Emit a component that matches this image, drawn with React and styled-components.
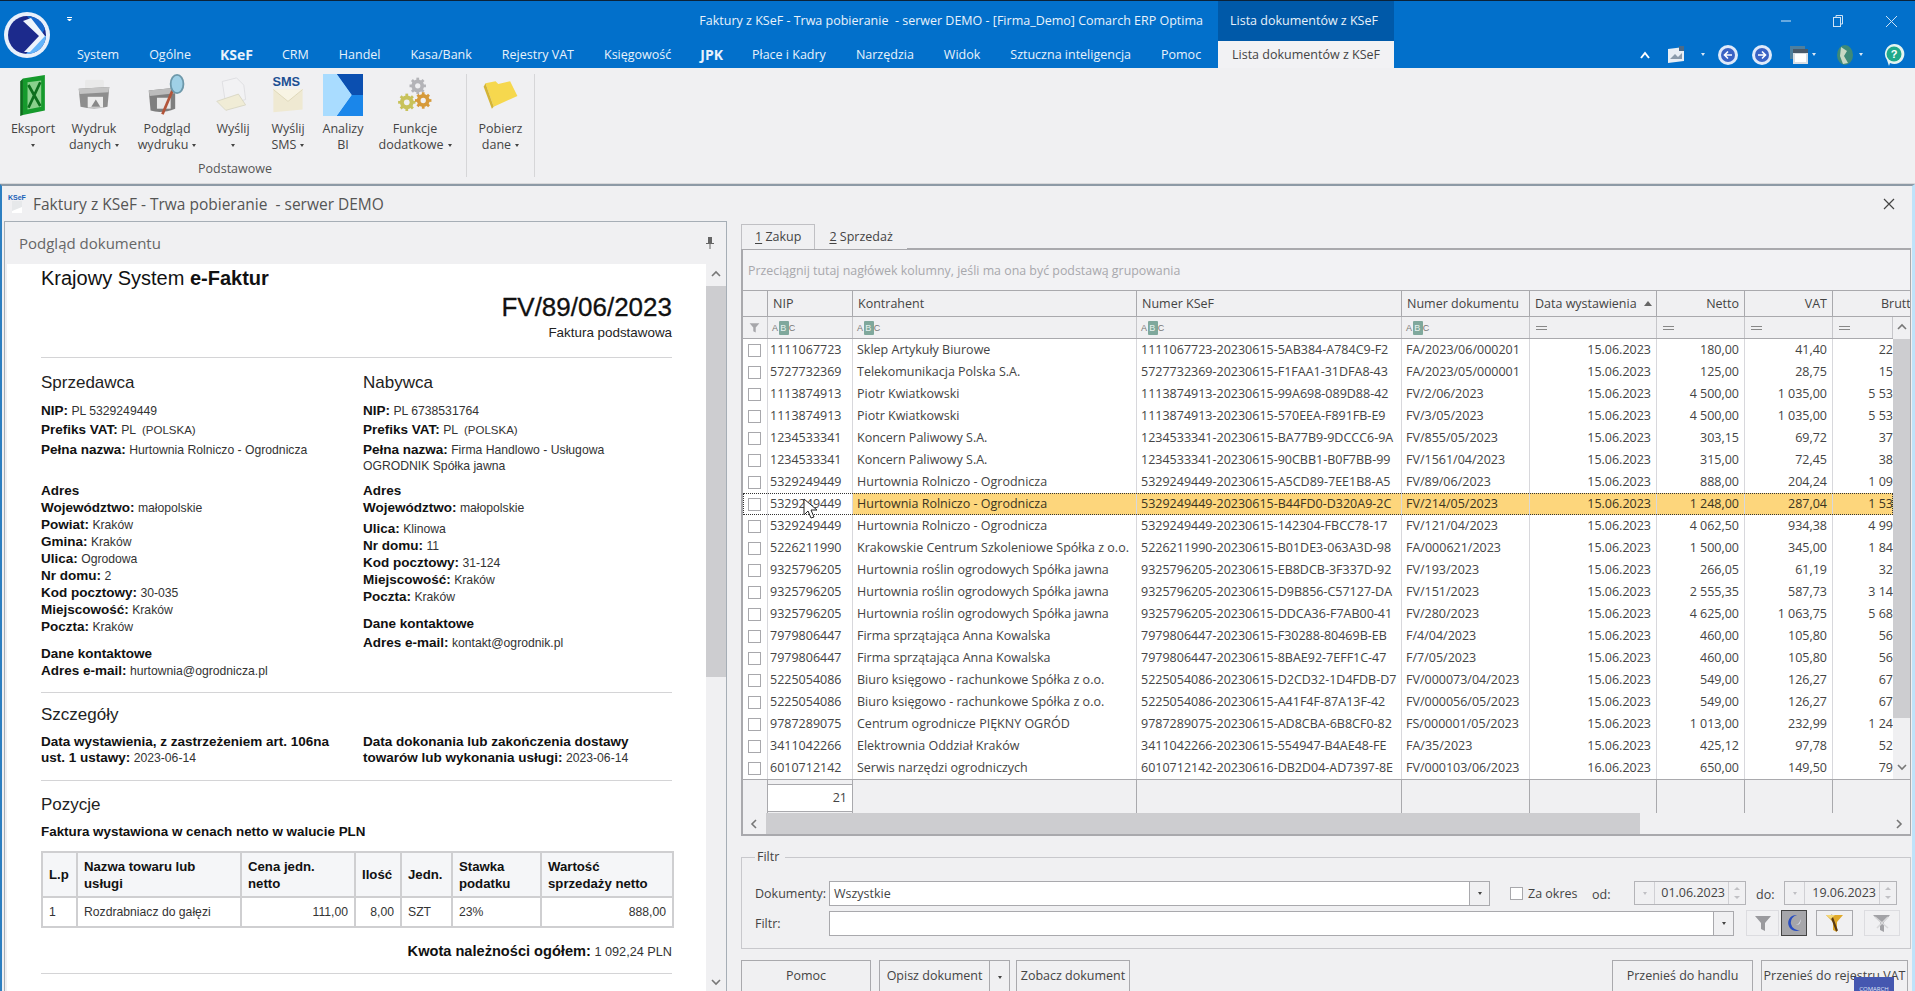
import styled, { createGlobalStyle } from "styled-components";

const UI_FONT = `"Open Sans", "Noto Sans", sans-serif`;
const DOC_FONT = `"Liberation Sans", Arial, sans-serif`;

const COLUMNS = "25px 85px 284px 265px 128px 127px 88px 88px 60px";

const ROWS = [
  ["1111067723", "Sklep Artykuły Biurowe", "1111067723-20230615-5AB384-A784C9-F2", "FA/2023/06/000201", "15.06.2023", "180,00", "41,40", "22"],
  ["5727732369", "Telekomunikacja Polska S.A.", "5727732369-20230615-F1FAA1-31DFA8-43", "FA/2023/05/000001", "15.06.2023", "125,00", "28,75", "15"],
  ["1113874913", "Piotr Kwiatkowski", "1113874913-20230615-99A698-089D88-42", "FV/2/06/2023", "15.06.2023", "4 500,00", "1 035,00", "5 53"],
  ["1113874913", "Piotr Kwiatkowski", "1113874913-20230615-570EEA-F891FB-E9", "FV/3/05/2023", "15.06.2023", "4 500,00", "1 035,00", "5 53"],
  ["1234533341", "Koncern Paliwowy S.A.", "1234533341-20230615-BA77B9-9DCCC6-9A", "FV/855/05/2023", "15.06.2023", "303,15", "69,72", "37"],
  ["1234533341", "Koncern Paliwowy S.A.", "1234533341-20230615-90CBB1-B0F7BB-99", "FV/1561/04/2023", "15.06.2023", "315,00", "72,45", "38"],
  ["5329249449", "Hurtownia Rolniczo - Ogrodnicza", "5329249449-20230615-A5CD89-7EE1B8-A5", "FV/89/06/2023", "15.06.2023", "888,00", "204,24", "1 09"],
  ["5329249449", "Hurtownia Rolniczo - Ogrodnicza", "5329249449-20230615-B44FD0-D320A9-2C", "FV/214/05/2023", "15.06.2023", "1 248,00", "287,04", "1 53"],
  ["5329249449", "Hurtownia Rolniczo - Ogrodnicza", "5329249449-20230615-142304-FBCC78-17", "FV/121/04/2023", "15.06.2023", "4 062,50", "934,38", "4 99"],
  ["5226211990", "Krakowskie Centrum Szkoleniowe Spółka z o.o.", "5226211990-20230615-B01DE3-063A3D-98", "FA/000621/2023", "15.06.2023", "1 500,00", "345,00", "1 84"],
  ["9325796205", "Hurtownia roślin ogrodowych Spółka jawna", "9325796205-20230615-EB8DCB-3F337D-92", "FV/193/2023", "15.06.2023", "266,05", "61,19", "32"],
  ["9325796205", "Hurtownia roślin ogrodowych Spółka jawna", "9325796205-20230615-D9B856-C57127-DA", "FV/151/2023", "15.06.2023", "2 555,35", "587,73", "3 14"],
  ["9325796205", "Hurtownia roślin ogrodowych Spółka jawna", "9325796205-20230615-DDCA36-F7AB00-41", "FV/280/2023", "15.06.2023", "4 625,00", "1 063,75", "5 68"],
  ["7979806447", "Firma sprzątająca Anna Kowalska", "7979806447-20230615-F30288-80469B-EB", "F/4/04/2023", "15.06.2023", "460,00", "105,80", "56"],
  ["7979806447", "Firma sprzątająca Anna Kowalska", "7979806447-20230615-8BAE92-7EFF1C-47", "F/7/05/2023", "15.06.2023", "460,00", "105,80", "56"],
  ["5225054086", "Biuro księgowo - rachunkowe Spółka z o.o.", "5225054086-20230615-D2CD32-1D4FDB-D7", "FV/000073/04/2023", "15.06.2023", "549,00", "126,27", "67"],
  ["5225054086", "Biuro księgowo - rachunkowe Spółka z o.o.", "5225054086-20230615-A41F4F-87A13F-42", "FV/000056/05/2023", "15.06.2023", "549,00", "126,27", "67"],
  ["9787289075", "Centrum ogrodnicze PIĘKNY OGRÓD", "9787289075-20230615-AD8CBA-6B8CF0-82", "FS/000001/05/2023", "15.06.2023", "1 013,00", "232,99", "1 24"],
  ["3411042266", "Elektrownia Oddział Kraków", "3411042266-20230615-554947-B4AE48-FE", "FA/35/2023", "15.06.2023", "425,12", "97,78", "52"],
  ["6010712142", "Serwis narzędzi ogrodniczych", "6010712142-20230616-DB2D04-AD7397-8E", "FV/000103/06/2023", "16.06.2023", "650,00", "149,50", "79"],
];

const MENU = [
  ["System"], ["Ogólne"], ["KSeF", true], ["CRM"], ["Handel"], ["Kasa/Bank"], ["Rejestry VAT"],
  ["Księgowość"], ["JPK", true], ["Płace i Kadry"], ["Narzędzia"], ["Widok"], ["Sztuczna inteligencja"], ["Pomoc"],
];

const GlobalStyle = createGlobalStyle`
  html, body { margin: 0; padding: 0; background: #f0f0f2; overflow: hidden; }
  * { box-sizing: border-box; }
`;

const Page = styled.div`
  width: 1915px;
  height: 991px;
  overflow: hidden;
  font-family: ${UI_FONT};
  font-size: 12.5px;
  color: #444;
  background: #f0f0f2;
`;

const TitleBar = styled.header`
  height: 68px;
  display: flex;
  background: #0270cb;
  border-top: 1px solid #0b2238;
  color: #fff;
`;

const LogoSlot = styled.div`
  width: 62px;
  flex-shrink: 0;
  padding: 11px 0 0 4px;
`;

const TitleColumn = styled.div`
  flex: 1;
  min-width: 0;
  display: flex;
  flex-direction: column;
`;

const TopRow = styled.div`
  height: 40px;
  display: flex;
  align-items: stretch;
`;

const QuickAccess = styled.span`
  margin: 16px 0 0 5px;
  width: 5px;
  height: 5px;
  border-top: 1px solid #fff;
  &::after {
    content: "";
    display: block;
    margin-top: 1px;
    border: 2.5px solid transparent;
    border-top-color: #fff;
    border-bottom: 0;
  }
`;

const WindowTitle = styled.div`
  margin-left: auto;
  padding-right: 15px;
  line-height: 40px;
  white-space: pre;
  color: #e8f2fb;
`;

const ContextTab = styled.div`
  width: 176px;
  background: #0059a8;
  line-height: 40px;
  padding-left: 12px;
  color: #e8f2fb;
`;

const WindowControls = styled.div`
  width: 521px;
  display: flex;
  justify-content: flex-end;
  align-items: center;
  gap: 42px;
  padding: 0 17px 0 0;
  color: #cfe3f5;
`;

const MenuRow = styled.nav`
  height: 27px;
  display: flex;
  align-items: center;
`;

const MenuTab = styled.div`
  padding: 0 ${(p) => (p.$bold ? 14 : 15)}px;
  line-height: 27px;
  white-space: nowrap;
  font-weight: ${(p) => (p.$bold ? 700 : 400)};
  font-size: ${(p) => (p.$bold ? "14px" : "12.5px")};
  color: #e8f2fb;
`;

const ActiveTab = styled.div`
  margin-left: auto;
  width: 176px;
  flex-shrink: 0;
  height: 27px;
  line-height: 27px;
  text-align: center;
  background: #f2f2f4;
  color: #444;
`;

const HeadTools = styled.div`
  width: 521px;
  flex-shrink: 0;
  display: flex;
  align-items: center;
  padding-left: 246px;
`;

const HeadTool = styled.span`
  display: flex;
  margin-left: ${(p) => p.$left}px;
`;

const TinyCaret = styled.span`
  display: inline-block;
  width: 0;
  height: 0;
  border: 2.5px solid transparent;
  border-top: 3px solid ${(p) => p.$color || "#444"};
  border-bottom: 0;
  vertical-align: middle;
  margin-left: ${(p) => (p.$left === undefined ? 4 : p.$left)}px;
`;

const Ribbon = styled.section`
  height: 116px;
  display: flex;
  background: #f0f0f2;
  padding-top: 6px;
  border-bottom: 1px solid #d8d8da;
`;

const RibbonGroup = styled.div`
  width: ${(p) => p.$w}px;
  height: 103px;
  padding-left: ${(p) => p.$pad || 0}px;
  border-right: 1px solid #d6d6d8;
  display: flex;
  flex-direction: column;
`;

const RibbonButtons = styled.div`
  display: flex;
  height: 90px;
`;

const RibbonButton = styled.div`
  width: ${(p) => p.$w}px;
  display: flex;
  flex-direction: column;
  align-items: center;
  text-align: center;
  line-height: 16px;
  color: #444;
  svg {
    height: 42px;
    margin-bottom: 5px;
  }
`;

const RibbonCaption = styled.div`
  text-align: center;
  line-height: 16px;
  color: #555;
`;

const WindowFrame = styled.main`
  height: 807px;
  border-top: 2px solid #8d9aa6;
  border-left: 2px solid #2d7fc1;
  border-right: 3px solid #bfe3fa;
  background: #f0f0f2;
`;

const WindowHead = styled.div`
  height: 35px;
  display: flex;
  align-items: center;
  justify-content: space-between;
  padding: 0 17px 0 6px;
  font-size: 15.5px;
  color: #555;
`;

const WindowName = styled.div`
  display: flex;
  align-items: flex-start;
  gap: 5px;
  white-space: pre;
`;

const Workspace = styled.div`
  display: flex;
  padding-left: 2px;
  height: 770px;
`;

const PreviewPanel = styled.aside`
  width: 723px;
  height: 770px;
  overflow: hidden;
  border: 1px solid #a6aeb6;
  border-bottom: 0;
`;

const PanelHead = styled.div`
  height: 42px;
  display: flex;
  align-items: center;
  justify-content: space-between;
  padding: 0 12px 0 14px;
  font-size: 15px;
  color: #666;
`;

const PanelBody = styled.div`
  display: flex;
  height: 730px;
  margin-left: 2px;
`;

const DocSheet = styled.article`
  width: 701px;
  background: #fff;
  padding: 2px 34px 0 34px;
  font-family: ${DOC_FONT};
  font-size: 12.2px;
  color: #333;
  overflow: hidden;
  b { font-size: 13.5px; color: #111; }
`;

const DocSystem = styled.h1`
  margin: 0;
  font-size: 20px;
  line-height: 24px;
  font-weight: 400;
  color: #111;
  b { font-weight: 700; font-size: 20px; }
`;

const DocNumber = styled.div`
  margin-top: 2px;
  text-align: right;
  font-size: 26px;
  line-height: 30px;
  color: #111;
  -webkit-text-stroke: 0.3px #111;
`;

const DocType = styled.div`
  margin-top: 2px;
  text-align: right;
  font-size: 13.4px;
  line-height: 18px;
  color: #222;
`;

const Rule = styled.hr`
  margin: ${(p) => p.$top}px 0 0;
  border: 0;
  border-top: 1px solid #d4d4d6;
`;

const SectionTitle = styled.h2`
  margin: ${(p) => p.$top}px 0 0;
  font-size: 17px;
  line-height: 20px;
  font-weight: 400;
  color: #222;
`;

const Parties = styled.div`
  display: grid;
  grid-template-columns: 322px 1fr;
`;

const Field = styled.div`
  margin-top: ${(p) => p.$top || 0}px;
  line-height: 16px;
  height: ${(p) => (p.$tall ? "auto" : "17px")};
  white-space: nowrap;
`;

const Small = styled.span`
  font-size: 11.5px;
  margin-left: 3px;
`;

const NameBlock = styled.div`
  height: 58px;
`;

const DetailRow = styled.div`
  display: grid;
  grid-template-columns: 322px 1fr;
  margin-top: 9px;
  line-height: 16px;
`;

const PositionsNote = styled.div`
  margin-top: 9px;
  line-height: 16px;
  font-weight: 700;
  font-size: 13.4px;
  color: #111;
`;

const ItemsTable = styled.table`
  width: 631px;
  margin-top: 11px;
  border-collapse: collapse;
  table-layout: fixed;
  th, td {
    border: 2px solid #cfcfd1;
    padding: 0 6px;
    line-height: 17px;
    text-align: left;
  }
  th {
    height: 45px;
    font-size: 13.2px;
    background: #f5f6f8;
    color: #111;
    white-space: nowrap;
  }
  td { height: 30px; }
`;

const NumCell = styled.td`
  && { text-align: right; }
`;

const TotalLine = styled.div`
  margin-top: 14px;
  text-align: right;
  font-size: 12.7px;
  line-height: 18px;
  b { font-size: 14.6px; }
`;

const VScroll = styled.div`
  width: ${(p) => p.$w}px;
  display: flex;
  flex-direction: column;
  align-items: center;
  background: #f0f0f2;
  flex-shrink: 0;
`;

const ScrollArrow = styled.div`
  height: ${(p) => p.$h}px;
  width: 100%;
  display: flex;
  align-items: center;
  justify-content: center;
  color: #777;
`;

const VThumb = styled.div`
  width: 100%;
  height: ${(p) => p.$h}px;
  background: #cdcdd0;
`;

const VTrack = styled.div`
  flex: 1;
`;

const ListPanel = styled.section`
  width: 1170px;
  margin-left: 14px;
`;

const TabStrip = styled.div`
  margin-top: 3px;
  height: 24px;
  display: flex;
`;

const ListTab = styled.div`
  height: 25px;
  padding: 0 13px;
  line-height: 23px;
  background: #f0f0f2;
  border: ${(p) => (p.$active ? "1px solid #c0c0c4" : "1px solid transparent")};
  border-bottom: 0;
  position: relative;
  u { text-underline-offset: 2px; }
`;

const GridBox = styled.div`
  height: 588px;
  border: 2px solid #a9a9ad;
  border-right-width: 1px;
  display: flex;
  flex-direction: column;
  overflow: hidden;
`;

const GroupHint = styled.div`
  height: 40px;
  line-height: 42px;
  padding-left: 5px;
  color: #a8a8ac;
  font-size: 12.4px;
  background: #f2f2f4;
`;

const HeaderRow = styled.div`
  display: grid;
  grid-template-columns: ${COLUMNS} 1fr;
  height: 27px;
  border-top: 1px solid #a9a9ad;
  border-bottom: 1px solid #a9a9ad;
`;

const HeaderCell = styled.div`
  display: flex;
  align-items: center;
  justify-content: ${(p) => (p.$right ? "flex-end" : "flex-start")};
  padding: 0 5px;
  border-right: 1px solid #a9a9ad;
  white-space: nowrap;
  overflow: hidden;
  gap: 7px;
`;

const LastHeaderCell = styled(HeaderCell)`
  grid-column: span 2;
  border-right: 0;
  padding: 0 0 0 48px;
`;

const SortMark = styled.span`
  width: 0;
  height: 0;
  border: 4px solid transparent;
  border-bottom: 5px solid #666;
  border-top: 0;
`;

const GridMiddle = styled.div`
  flex: 1;
  display: flex;
  min-height: 0;
`;

const GridData = styled.div`
  width: 1150px;
  display: flex;
  flex-direction: column;
`;

const FilterRow = styled.div`
  display: grid;
  grid-template-columns: ${COLUMNS};
  height: 22px;
  border-bottom: 1px solid #a9a9ad;
`;

const FilterCell = styled.div`
  display: flex;
  align-items: center;
  padding-left: ${(p) => p.$pad ?? 4}px;
  border-right: 1px solid #c6c6ca;
`;

const AbcMark = styled.span`
  font-size: 9px;
  letter-spacing: 0.8px;
  color: #777;
  font-family: ${DOC_FONT};
  b {
    display: inline-block;
    padding: 2px 1.5px;
    font-weight: 400;
    background: #7fa89c;
    color: #e8f2ee;
    border-radius: 1px;
  }
`;

const EqualsMark = styled.span`
  width: 11px;
  height: 4px;
  margin-left: 2px;
  border-top: 1px solid #888;
  border-bottom: 1px solid #888;
`;

const DataRow = styled.div`
  display: grid;
  grid-template-columns: ${COLUMNS};
  height: 22px;
  background: #fff;
  ${(p) => p.$selected && "outline: 1px dotted #333; outline-offset: -1px;"}
`;

const DataCell = styled.div`
  line-height: 22px;
  padding: 0 ${(p) => (p.$clip ? 0 : 5)}px 0 ${(p) => (p.$first ? 2 : 4)}px;
  text-align: ${(p) => (p.$right ? "right" : "left")};
  border-right: ${(p) => (p.$clip ? "0" : "1px solid #d8d8dc")};
  white-space: nowrap;
  overflow: hidden;
  background: ${(p) => (p.$selected ? "#fdd67c" : "transparent")};
  color: ${(p) => (p.$selected ? "#3a3320" : "#444")};
`;

const CheckCell = styled.div`
  display: flex;
  align-items: center;
  justify-content: center;
  padding-right: 1px;
  border-right: 1px solid #d8d8dc;
`;

const CheckBox = styled.span`
  display: block;
  width: 13px;
  height: 13px;
  background: #fff;
  border: 1px solid #a8a8ac;
`;

const SummaryRow = styled.div`
  display: grid;
  grid-template-columns: ${COLUMNS} 1fr;
  height: 34px;
  border-top: 1px solid #a9a9ad;
`;

const SummaryCell = styled.div`
  border-right: ${(p) => (p.$last ? "0" : "1px solid #a9a9ad")};
`;

const SummaryBox = styled.div`
  height: 28px;
  margin: 4px -1px 0 -1px;
  background: #fff;
  border: 1px solid #a9a9ad;
  text-align: right;
  line-height: 26px;
  padding-right: 5px;
`;

const HScroll = styled.div`
  height: 21px;
  display: flex;
  align-items: stretch;
`;

const HArrow = styled.div`
  width: ${(p) => p.$w}px;
  display: flex;
  align-items: center;
  justify-content: center;
  color: #777;
`;

const HThumb = styled.div`
  width: 874px;
  background: #cdcdd0;
`;

const HTrack = styled.div`
  flex: 1;
`;

const FilterGroup = styled.fieldset`
  margin: 13px 0 0;
  height: 100px;
  padding: 15px 6px 0 13px;
  border: 1px solid #c8c8cc;
  min-width: 0;
`;

const FilterLegend = styled.legend`
  margin-left: 0;
  padding: 0 6px 0 2px;
  line-height: 16px;
  height: 16px;
`;

const FilterLine = styled.div`
  display: flex;
  align-items: center;
  height: 26px;
  margin-bottom: 4px;
`;

const FilterLabel = styled.label`
  width: 74px;
  flex-shrink: 0;
`;

const ComboBox = styled.div`
  width: ${(p) => p.$w}px;
  height: 25px;
  display: flex;
  background: #fff;
  border: 1px solid #a9a9ad;
`;

const ComboText = styled.div`
  flex: 1;
  line-height: 23px;
  padding-left: 4px;
`;

const ComboButton = styled.div`
  width: 20px;
  background: #f0f0f2;
  border-left: 1px solid #a9a9ad;
  display: flex;
  align-items: center;
  justify-content: center;
`;

const PeriodCheck = styled.label`
  display: flex;
  align-items: center;
  gap: 5px;
  margin-left: 20px;
  width: 82px;
`;

const DateLabel = styled.span`
  width: ${(p) => p.$w}px;
  padding: 2px 0 0 ${(p) => p.$pad || 0}px;
`;

const DateBox = styled.div`
  width: ${(p) => p.$w}px;
  height: 24px;
  display: flex;
  border: 1px solid #b4b4b8;
  background: #f0f0f2;
`;

const DateDrop = styled.div`
  width: 20px;
  border-right: 1px solid #d0d0d4;
  display: flex;
  align-items: center;
  justify-content: center;
`;

const DateText = styled.div`
  flex: 1;
  text-align: right;
  line-height: 22px;
  padding-right: 3px;
`;

const DateSpin = styled.div`
  width: 17px;
  border-left: 1px solid #d0d0d4;
  display: flex;
  flex-direction: column;
  align-items: center;
  justify-content: space-evenly;
`;

const SpinUp = styled.span`
  width: 0;
  height: 0;
  border: 3px solid transparent;
  border-bottom: 3px solid #c0c0c4;
  border-top: 0;
`;

const SpinDown = styled(SpinUp)`
  border-bottom: 0;
  border-top: 3px solid #c0c0c4;
`;

const ToolButton = styled.div`
  width: ${(p) => p.$w}px;
  height: 26px;
  margin-left: ${(p) => p.$left}px;
  display: flex;
  align-items: center;
  justify-content: center;
  border: 1px solid ${(p) => (p.$active ? "#444" : p.$strong ? "#a9a9ad" : "#dcdce0")};
  background: ${(p) => (p.$active ? "#a6a6aa" : "#f0f0f2")};
`;

const ActionBar = styled.div`
  margin-top: 11px;
  height: 36px;
  display: flex;
  position: relative;
  padding-right: 3px;
`;

const ActionButton = styled.div`
  width: ${(p) => p.$w}px;
  margin-left: ${(p) => p.$left || 0}px;
  height: 34px;
  line-height: 30px;
  text-align: center;
  white-space: nowrap;
  background: #f0f0f2;
  border: 1px solid #a9a9ad;
`;

const SplitButton = styled(ActionButton)`
  display: flex;
`;

const SplitMain = styled.div`
  flex: 1;
`;

const SplitDrop = styled.div`
  width: 20px;
  border-left: 1px solid #a9a9ad;
  display: flex;
  align-items: center;
  justify-content: center;
`;

const ActionGap = styled.div`
  flex: 1;
`;

const VendorBadge = styled.div`
  position: absolute;
  right: 17px;
  top: 17px;
  width: 40px;
  height: 16px;
  background: #4557b0;
  color: #dfe4f7;
  font-size: 6px;
  line-height: 24px;
  text-align: center;
`;

const MouseCursor = styled.svg`
  position: absolute;
  left: 803px;
  top: 498px;
`;

function Chevron({ up, down, left, right }) {
  const d = up ? "M1 6 L5 2 L9 6" : down ? "M1 2 L5 6 L9 2" : left ? "M6 1 L2 5 L6 9" : right ? "M2 1 L6 5 L2 9" : "";
  return (
    <svg width="10" height="10" viewBox="0 0 10 10" fill="none" stroke="#777" strokeWidth="1.6">
      <path d={d} />
    </svg>
  );
}

function Logo() {
  return (
    <svg width="46" height="46" viewBox="0 0 46 46">
      <circle cx="23" cy="23" r="23" fill="#e8f0fb" />
      <circle cx="23" cy="23" r="19" fill="#1c2a8c" />
      <path d="M23 4 A19 19 0 0 1 41 17 L37 23 L23 4Z" fill="#1668cc" />
      <path d="M37 24 L42 24 A19 19 0 0 1 22 42 L37 24Z" fill="#63b4fa" />
      <path d="M19 9 L35 24 L20 40 L26 40 L41 24 L27 6Z" fill="#eef4fc" />
    </svg>
  );
}

function KsefIcon() {
  return (
    <svg width="20" height="22" viewBox="0 0 20 22">
      <rect x="4" y="8" width="10" height="12" fill="#e6e8ea" />
      <path d="M4 18 L14 14 L14 20 L4 20Z" fill="#fff" />
      <text x="0" y="7" fontSize="7" fontWeight="700" fill="#1a62b8" fontFamily="Liberation Sans, sans-serif">KSeF</text>
    </svg>
  );
}

function ExcelIcon() {
  return (
    <svg viewBox="0 0 30 46" width="30">
      <path d="M4 5 L28 1 L28 40 L4 45Z" fill="#169a2c" />
      <path d="M9 9 L24 7 L24 36 L9 39Z" fill="#8ad08c" />
      <path d="M10 12 L23 35 M23 9 L10 37" stroke="#0d6f1d" strokeWidth="3" />
      <path d="M4 5 L1 8 L1 46 L4 45Z" fill="#0c6d1c" />
    </svg>
  );
}

function PrinterIcon() {
  return (
    <svg viewBox="0 0 40 46" width="36">
      <rect x="10" y="6" width="21" height="14" rx="2" fill="#e9e9e9" />
      <path d="M3 16 L37 14 L35 36 Q20 40 5 36Z" fill="#8e8e8e" />
      <path d="M3 16 L37 14 L36 20 L4 22Z" fill="#c4c4c4" />
      <rect x="13" y="25" width="17" height="12" fill="#ececec" />
      <path d="M17 36 L22 28 L27 36Z" fill="#888" />
    </svg>
  );
}

function PreviewIcon() {
  return (
    <svg viewBox="0 0 42 46" width="40">
      <path d="M1 18 L30 15 L30 38 Q15 44 3 40Z" fill="#7f7f7f" />
      <path d="M1 18 L30 15 L30 21 L2 24Z" fill="#bcbcbc" />
      <rect x="10" y="26" width="15" height="12" fill="#e8e8e8" />
      <path d="M16 44 L27 18" stroke="#b3553a" strokeWidth="3" />
      <ellipse cx="32" cy="11" rx="7" ry="10" fill="#9fd0e6" stroke="#6d98aa" strokeWidth="2" />
    </svg>
  );
}

function SendIcon() {
  return (
    <svg viewBox="0 0 40 46" width="36">
      <path d="M8 8 L24 4 L32 12 L34 28 L12 34Z" fill="#f2f2f4" stroke="#dcdce0" />
      <path d="M2 30 L26 22 L34 34 L12 40Z" fill="#f0ecd6" stroke="#d8d6c4" />
    </svg>
  );
}

function SmsIcon() {
  return (
    <svg viewBox="0 0 36 46" width="34">
      <text x="1" y="13" fontSize="14" fontWeight="700" fill="#1c4f92" fontFamily="Liberation Sans, sans-serif">SMS</text>
      <path d="M2 17 L34 17 L34 39 L2 42Z" fill="#efe9d2" />
      <path d="M2 17 L18 30 L34 17" fill="#f8f4e4" stroke="#ddd6b8" />
    </svg>
  );
}

function BiIcon() {
  return (
    <svg viewBox="0 0 40 46" width="40" preserveAspectRatio="none">
      <rect width="40" height="46" rx="2" fill="#0f6fd8" />
      <path d="M0 0 H14 L29 23 L14 46 H0Z" fill="#a9dcff" />
      <path d="M14 0 H40 V23 H29Z" fill="#0b4fb0" />
      <path d="M29 23 H40 V46 H14Z" fill="#1a86ea" />
    </svg>
  );
}

function Gear({ x, y, r, color }) {
  const teeth = [0, 45, 90, 135].map((a) => (
    <rect key={a} x={x - 1.5} y={y - r - 2} width="3" height={2 * r + 4} fill={color} transform={`rotate(${a} ${x} ${y})`} />
  ));
  return (
    <g>
      {teeth}
      <circle cx={x} cy={y} r={r} fill={color} />
      <circle cx={x} cy={y} r={r / 2.4} fill="#f0f0f2" />
    </g>
  );
}

function GearsIcon() {
  return (
    <svg viewBox="0 0 40 46" width="38">
      <Gear x={23} y={13} r={7} color="#b4b4b8" />
      <Gear x={11} y={31} r={7.5} color="#c8c25a" />
      <Gear x={29} y={29} r={7} color="#d69a3a" />
    </svg>
  );
}

function FolderIcon() {
  return (
    <svg viewBox="0 0 40 46" width="38">
      <path d="M3 10 L14 8 L17 11 L30 8 L38 24 L12 36 Z" fill="#f6d84e" />
      <path d="M3 10 L12 36 L10 38 L1 14Z" fill="#d4b436" />
    </svg>
  );
}

function PictureTool() {
  return (
    <svg width="20" height="20" viewBox="0 0 20 20">
      <path d="M2 4 L18 2 L18 16 L2 18Z" fill="#e8eef4" />
      <path d="M4 14 L9 9 L12 12 L16 8 L16 14Z" fill="#8a9aaa" />
      <rect x="13" y="1" width="5" height="5" fill="#4a6a88" />
    </svg>
  );
}

function NavTool({ back }) {
  return (
    <svg width="22" height="22" viewBox="0 0 22 22">
      <circle cx="11" cy="11" r="10" fill="#dfeafa" />
      <circle cx="11" cy="11" r="7" fill="#3a62c4" />
      <path d={back ? "M15 11 H8 M11 7.5 L7.5 11 L11 14.5" : "M7 11 H14 M11 7.5 L14.5 11 L11 14.5"} stroke="#fff" strokeWidth="1.6" fill="none" />
    </svg>
  );
}

function WindowsTool() {
  return (
    <svg width="20" height="20" viewBox="0 0 20 20">
      <rect x="1" y="1" width="15" height="13" fill="#4d7f9f" />
      <rect x="4" y="4" width="15" height="15" fill="#d8dee4" />
      <rect x="4" y="4" width="15" height="4" fill="#4a5a6a" />
      <rect x="6" y="9" width="11" height="8" fill="#fff" />
    </svg>
  );
}

function GlobeTool() {
  return (
    <svg width="20" height="22" viewBox="0 0 20 22">
      <ellipse cx="10" cy="11" rx="8" ry="10" fill="#3e8a78" />
      <path d="M6 3 L12 7 L9 12 L13 19 L8 20 L5 12Z" fill="#c8d8c4" />
    </svg>
  );
}

function HelpTool() {
  return (
    <svg width="22" height="24" viewBox="0 0 22 24">
      <path d="M11 1 A10 10 0 1 1 7 20 L6 23 L4 17 A10 10 0 0 1 11 1Z" fill="#e4f4f0" />
      <circle cx="11" cy="11" r="7.5" fill="#1fa98a" />
      <text x="11" y="15" fontSize="11" fontWeight="700" fill="#fff" textAnchor="middle" fontFamily="Liberation Sans, sans-serif">?</text>
    </svg>
  );
}

function PinIcon() {
  return (
    <svg width="8" height="12" viewBox="0 0 8 12">
      <path d="M2 0 H6 V6 H8 V7 H4.5 V12 H3.5 V7 H0 V6 H2Z" fill="#666" />
    </svg>
  );
}

function FunnelIcon({ color = "#9a9a9e", size = 18 }) {
  return (
    <svg width={size} height={size} viewBox="0 0 18 18">
      <path d="M1 2 H17 L11 9 V17 L7 15 V9Z" fill={color} />
    </svg>
  );
}

function MoonIcon() {
  return (
    <svg width="16" height="18" viewBox="0 0 16 18">
      <path d="M11 1 A8 8 0 1 0 14 16 A7 7 0 0 1 11 1Z" fill="#2a4ec0" />
      <path d="M14 5 A4 4 0 0 1 10 11 A5 5 0 0 0 14 5Z" fill="#e8ecf8" />
    </svg>
  );
}

function FunnelEditIcon() {
  return (
    <svg width="20" height="20" viewBox="0 0 20 20">
      <path d="M1 2 H18 L12 9 V19 L8 17 V9Z" fill="#e0a92a" />
      <path d="M6 2 L12 18" stroke="#5a3a14" strokeWidth="2.2" />
      <path d="M1 2 H10 L6 6Z" fill="#f4d878" />
    </svg>
  );
}

function FunnelClearIcon() {
  return (
    <svg width="20" height="20" viewBox="0 0 20 20">
      <path d="M1 2 H18 L12 9 V19 L8 17 V9Z" fill="#a2a2a6" />
      <path d="M3 4 L16 15 M16 4 L5 15" stroke="#d8d8da" strokeWidth="1.6" />
    </svg>
  );
}

function AbcFilter() {
  return (
    <AbcMark>
      A<b>B</b>C
    </AbcMark>
  );
}

function RibbonItem({ w, icon, lines, caret }) {
  return (
    <RibbonButton $w={w}>
      {icon}
      <div>{lines[0]}</div>
      <div>
        {lines[1]}
        {caret && <TinyCaret $left={lines[1] ? 4 : 0} />}
      </div>
    </RibbonButton>
  );
}

function Party({ name, nip, fullName, address, mail }) {
  const buyer = name === "Nabywca";
  return (
    <div>
      <SectionTitle $top={15}>{name}</SectionTitle>
      <NameBlock>
        <Field $top={10}><b>NIP:</b> PL {nip}</Field>
        <Field $top={2}><b>Prefiks VAT:</b> PL <Small>(POLSKA)</Small></Field>
        <Field $top={3} $tall><b>Pełna nazwa:</b> {fullName}</Field>
      </NameBlock>
      <Field $top={22}><b>Adres</b></Field>
      {address.map(([label, value]) => (
        <Field key={label} $top={label === "Ulica" && buyer ? 4 : 0}>
          <b>{label}:</b> {value}
        </Field>
      ))}
      <Field $top={10}><b>Dane kontaktowe</b></Field>
      <Field $top={buyer ? 2 : 0}><b>Adres e-mail:</b> {mail}</Field>
    </div>
  );
}

function DocumentPreview() {
  return (
    <DocSheet>
      <DocSystem>Krajowy System <b>e-Faktur</b></DocSystem>
      <DocNumber>FV/89/06/2023</DocNumber>
      <DocType>Faktura podstawowa</DocType>
      <Rule $top={15} />
      <Parties>
        <Party
          name="Sprzedawca"
          nip="5329249449"
          fullName="Hurtownia Rolniczo - Ogrodnicza"
          mail="hurtownia@ogrodnicza.pl"
          address={[
            ["Województwo", "małopolskie"],
            ["Powiat", "Kraków"],
            ["Gmina", "Kraków"],
            ["Ulica", "Ogrodowa"],
            ["Nr domu", "2"],
            ["Kod pocztowy", "30-035"],
            ["Miejscowość", "Kraków"],
            ["Poczta", "Kraków"],
          ]}
        />
        <Party
          name="Nabywca"
          nip="6738531764"
          fullName={<>Firma Handlowo - Usługowa<br />OGRODNIK Spółka jawna</>}
          mail="kontakt@ogrodnik.pl"
          address={[
            ["Województwo", "małopolskie"],
            ["Ulica", "Klinowa"],
            ["Nr domu", "11"],
            ["Kod pocztowy", "31-124"],
            ["Miejscowość", "Kraków"],
            ["Poczta", "Kraków"],
          ]}
        />
      </Parties>
      <Rule $top={12} />
      <SectionTitle $top={12}>Szczegóły</SectionTitle>
      <DetailRow>
        <div><b>Data wystawienia, z zastrzeżeniem art. 106na<br />ust. 1 ustawy:</b> 2023-06-14</div>
        <div><b>Data dokonania lub zakończenia dostawy<br />towarów lub wykonania usługi:</b> 2023-06-14</div>
      </DetailRow>
      <Rule $top={14} />
      <SectionTitle $top={14}>Pozycje</SectionTitle>
      <PositionsNote>Faktura wystawiona w cenach netto w walucie PLN</PositionsNote>
      <ItemsTable>
        <colgroup>
          <col width="35" />
          <col width="164" />
          <col width="114" />
          <col width="46" />
          <col width="51" />
          <col width="89" />
          <col width="132" />
        </colgroup>
        <thead>
          <tr>
            <th>L.p</th>
            <th>Nazwa towaru lub<br />usługi</th>
            <th>Cena jedn.<br />netto</th>
            <th>Ilość</th>
            <th>Jedn.</th>
            <th>Stawka<br />podatku</th>
            <th>Wartość<br />sprzedaży netto</th>
          </tr>
        </thead>
        <tbody>
          <tr>
            <td>1</td>
            <td>Rozdrabniacz do gałęzi</td>
            <NumCell>111,00</NumCell>
            <NumCell>8,00</NumCell>
            <td>SZT</td>
            <td>23%</td>
            <NumCell>888,00</NumCell>
          </tr>
        </tbody>
      </ItemsTable>
      <TotalLine><b>Kwota należności ogółem:</b> 1 092,24 PLN</TotalLine>
      <Rule $top={12} />
    </DocSheet>
  );
}

function InvoiceGrid() {
  return (
    <GridBox>
      <GroupHint>Przeciągnij tutaj nagłówek kolumny, jeśli ma ona być podstawą grupowania</GroupHint>
      <HeaderRow>
        <HeaderCell />
        <HeaderCell>NIP</HeaderCell>
        <HeaderCell>Kontrahent</HeaderCell>
        <HeaderCell>Numer KSeF</HeaderCell>
        <HeaderCell>Numer dokumentu</HeaderCell>
        <HeaderCell>Data wystawienia <SortMark /></HeaderCell>
        <HeaderCell $right>Netto</HeaderCell>
        <HeaderCell $right>VAT</HeaderCell>
        <LastHeaderCell>Brutto</LastHeaderCell>
      </HeaderRow>
      <GridMiddle>
        <GridData>
          <FilterRow>
            <FilterCell $pad={6}><FunnelIcon color="#a6a6aa" size={11} /></FilterCell>
            <FilterCell><AbcFilter /></FilterCell>
            <FilterCell><AbcFilter /></FilterCell>
            <FilterCell><AbcFilter /></FilterCell>
            <FilterCell><AbcFilter /></FilterCell>
            <FilterCell><EqualsMark /></FilterCell>
            <FilterCell><EqualsMark /></FilterCell>
            <FilterCell><EqualsMark /></FilterCell>
            <FilterCell><EqualsMark /></FilterCell>
          </FilterRow>
          {ROWS.map((row, i) => {
            const selected = i === 7;
            return (
              <DataRow key={row[2]} $selected={selected}>
                <CheckCell><CheckBox /></CheckCell>
                <DataCell $first>{row[0]}</DataCell>
                <DataCell $selected={selected}>{row[1]}</DataCell>
                <DataCell $selected={selected}>{row[2]}</DataCell>
                <DataCell $selected={selected}>{row[3]}</DataCell>
                <DataCell $selected={selected} $right>{row[4]}</DataCell>
                <DataCell $selected={selected} $right>{row[5]}</DataCell>
                <DataCell $selected={selected} $right>{row[6]}</DataCell>
                <DataCell $selected={selected} $right $clip>{row[7]}</DataCell>
              </DataRow>
            );
          })}
        </GridData>
        <VScroll $w={17}>
          <ScrollArrow $h={22}><Chevron up /></ScrollArrow>
          <VThumb $h={379} />
          <VTrack />
          <ScrollArrow $h={22}><Chevron down /></ScrollArrow>
        </VScroll>
      </GridMiddle>
      <SummaryRow>
        <SummaryCell />
        <SummaryCell><SummaryBox>21</SummaryBox></SummaryCell>
        <SummaryCell />
        <SummaryCell />
        <SummaryCell />
        <SummaryCell />
        <SummaryCell />
        <SummaryCell />
        <SummaryCell $last />
      </SummaryRow>
      <HScroll>
        <HArrow $w={23}><Chevron left /></HArrow>
        <HThumb />
        <HTrack />
        <HArrow $w={20}><Chevron right /></HArrow>
      </HScroll>
    </GridBox>
  );
}

function DateField({ w, value }) {
  return (
    <DateBox $w={w}>
      <DateDrop><TinyCaret $left={0} $color="#c0c0c4" /></DateDrop>
      <DateText>{value}</DateText>
      <DateSpin><SpinUp /><SpinDown /></DateSpin>
    </DateBox>
  );
}

export default function App() {
  return (
    <Page>
      <GlobalStyle />
      <TitleBar>
        <LogoSlot><Logo /></LogoSlot>
        <TitleColumn>
          <TopRow>
            <QuickAccess />
            <WindowTitle>Faktury z KSeF - Trwa pobieranie  - serwer DEMO - [Firma_Demo] Comarch ERP Optima</WindowTitle>
            <ContextTab>Lista dokumentów z KSeF</ContextTab>
            <WindowControls>
              <svg width="10" height="10" viewBox="0 0 10 10"><path d="M0 5 H10" stroke="#cfe3f5" /></svg>
              <svg width="10" height="12" viewBox="0 0 10 12" fill="none" stroke="#cfe3f5"><rect x="0.5" y="2.5" width="7" height="9" /><path d="M3 2.5 V0.5 H9.5 V9 H7.5" /></svg>
              <svg width="13" height="13" viewBox="0 0 13 13" stroke="#cfe3f5"><path d="M1 1 L12 12 M12 1 L1 12" /></svg>
            </WindowControls>
          </TopRow>
          <MenuRow>
            {MENU.map(([name, bold]) => (
              <MenuTab key={name} $bold={bold}>{name}</MenuTab>
            ))}
            <ActiveTab>Lista dokumentów z KSeF</ActiveTab>
            <HeadTools>
              <HeadTool $left={0}><svg width="10" height="8" viewBox="0 0 10 8" fill="none" stroke="#fff" strokeWidth="2"><path d="M1 7 L5 2 L9 7" /></svg></HeadTool>
              <HeadTool $left={16}><PictureTool /></HeadTool>
              <HeadTool $left={15}><TinyCaret $left={0} $color="#dbe8f5" /></HeadTool>
              <HeadTool $left={12}><NavTool back /></HeadTool>
              <HeadTool $left={12}><NavTool /></HeadTool>
              <HeadTool $left={16}><WindowsTool /></HeadTool>
              <HeadTool $left={3}><TinyCaret $left={0} $color="#dbe8f5" /></HeadTool>
              <HeadTool $left={19}><GlobeTool /></HeadTool>
              <HeadTool $left={4}><TinyCaret $left={0} $color="#dbe8f5" /></HeadTool>
              <HeadTool $left={20}><HelpTool /></HeadTool>
            </HeadTools>
          </MenuRow>
        </TitleColumn>
      </TitleBar>

      <Ribbon>
        <RibbonGroup $w={467} $pad={4}>
          <RibbonButtons>
            <RibbonItem w={58} icon={<ExcelIcon />} lines={["Eksport", ""]} caret />
            <RibbonItem w={64} icon={<PrinterIcon />} lines={["Wydruk", "danych"]} caret />
            <RibbonItem w={82} icon={<PreviewIcon />} lines={["Podgląd", "wydruku"]} caret />
            <RibbonItem w={50} icon={<SendIcon />} lines={["Wyślij", ""]} caret />
            <RibbonItem w={60} icon={<SmsIcon />} lines={["Wyślij", "SMS"]} caret />
            <RibbonItem w={50} icon={<BiIcon />} lines={["Analizy", "BI"]} />
            <RibbonItem w={94} icon={<GearsIcon />} lines={["Funkcje", "dodatkowe"]} caret />
          </RibbonButtons>
          <RibbonCaption>Podstawowe</RibbonCaption>
        </RibbonGroup>
        <RibbonGroup $w={68}>
          <RibbonButtons>
            <RibbonItem w={67} icon={<FolderIcon />} lines={["Pobierz", "dane"]} caret />
          </RibbonButtons>
        </RibbonGroup>
      </Ribbon>

      <WindowFrame>
        <WindowHead>
          <WindowName><KsefIcon />Faktury z KSeF - Trwa pobieranie  - serwer DEMO</WindowName>
          <svg width="12" height="12" viewBox="0 0 12 12" stroke="#444" strokeWidth="1.2"><path d="M1 1 L11 11 M11 1 L1 11" /></svg>
        </WindowHead>
        <Workspace>
          <PreviewPanel>
            <PanelHead>Podgląd dokumentu<PinIcon /></PanelHead>
            <PanelBody>
              <DocumentPreview />
              <VScroll $w={20}>
                <ScrollArrow $h={22}><Chevron up /></ScrollArrow>
                <VThumb $h={391} />
                <VTrack />
                <ScrollArrow $h={22}><Chevron down /></ScrollArrow>
              </VScroll>
            </PanelBody>
          </PreviewPanel>

          <ListPanel>
            <TabStrip>
              <ListTab $active><u>1</u> Zakup</ListTab>
              <ListTab><u>2</u> Sprzedaż</ListTab>
            </TabStrip>
            <InvoiceGrid />
            <FilterGroup>
              <FilterLegend>Filtr</FilterLegend>
              <FilterLine>
                <FilterLabel>Dokumenty:</FilterLabel>
                <ComboBox $w={661}>
                  <ComboText>Wszystkie</ComboText>
                  <ComboButton><TinyCaret $left={0} /></ComboButton>
                </ComboBox>
                <PeriodCheck><CheckBox />Za okres</PeriodCheck>
                <DateLabel $w={42}>od:</DateLabel>
                <DateField w={112} value="01.06.2023" />
                <DateLabel $w={38} $pad={10}>do:</DateLabel>
                <DateField w={113} value="19.06.2023" />
              </FilterLine>
              <FilterLine>
                <FilterLabel>Filtr:</FilterLabel>
                <ComboBox $w={905}>
                  <ComboText />
                  <ComboButton><TinyCaret $left={0} /></ComboButton>
                </ComboBox>
                <ToolButton $w={33} $left={12}><FunnelIcon /></ToolButton>
                <ToolButton $w={26} $left={2} $active><MoonIcon /></ToolButton>
                <ToolButton $w={37} $left={9} $strong><FunnelEditIcon /></ToolButton>
                <ToolButton $w={36} $left={11}><FunnelClearIcon /></ToolButton>
              </FilterLine>
            </FilterGroup>
            <ActionBar>
              <ActionButton $w={130}>Pomoc</ActionButton>
              <SplitButton $w={131} $left={8}>
                <SplitMain>Opisz dokument</SplitMain>
                <SplitDrop><TinyCaret $left={0} /></SplitDrop>
              </SplitButton>
              <ActionButton $w={114} $left={6}>Zobacz dokument</ActionButton>
              <ActionGap />
              <ActionButton $w={141}>Przenieś do handlu</ActionButton>
              <ActionButton $w={147} $left={8}>Przenieś do rejestru VAT</ActionButton>
              <VendorBadge>COMARCH</VendorBadge>
            </ActionBar>
          </ListPanel>
        </Workspace>
      </WindowFrame>

      <MouseCursor width="16" height="22" viewBox="0 0 16 22">
        <path d="M1 1 L1 17 L5 13 L8 20 L11 19 L8 12 L14 12Z" fill="#fff" stroke="#222" strokeWidth="1" />
      </MouseCursor>
    </Page>
  );
}
